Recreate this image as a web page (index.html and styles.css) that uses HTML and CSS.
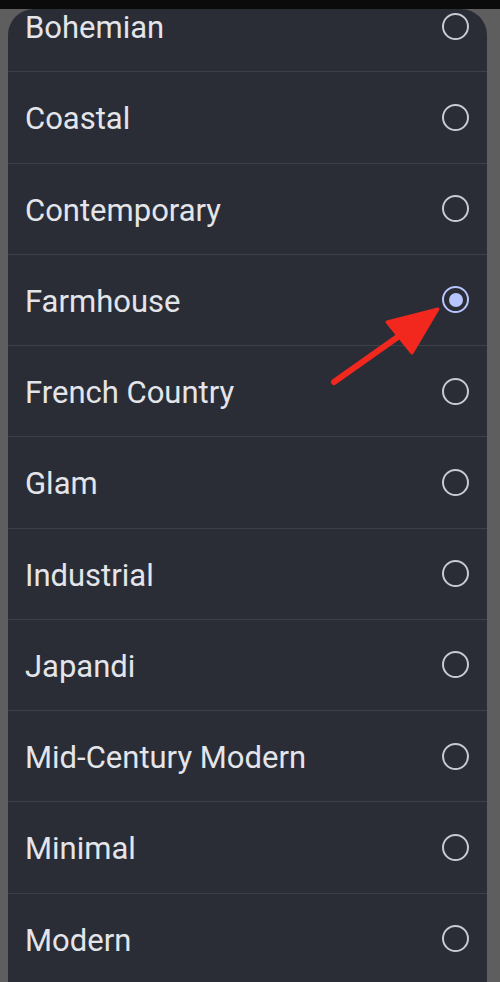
FILE: index.html
```html
<!DOCTYPE html>
<html lang="en">
<head>
    <meta charset="UTF-8">
    <meta name="viewport" content="width=device-width, initial-scale=1.0">
    <title>Style picker</title>
    <link rel="stylesheet" href="styles.css">
</head>
<body>
    <div class="status-bar"></div>
    <div class="sheet">
        <ul class="options">
            <li class="option"><span class="label">Bohemian</span><span class="radio"></span></li>
            <li class="option"><span class="label">Coastal</span><span class="radio"></span></li>
            <li class="option"><span class="label">Contemporary</span><span class="radio"></span></li>
            <li class="option"><span class="label">Farmhouse</span><span class="radio checked"></span></li>
            <li class="option"><span class="label">French Country</span><span class="radio"></span></li>
            <li class="option"><span class="label">Glam</span><span class="radio"></span></li>
            <li class="option"><span class="label">Industrial</span><span class="radio"></span></li>
            <li class="option"><span class="label">Japandi</span><span class="radio"></span></li>
            <li class="option"><span class="label">Mid-Century Modern</span><span class="radio"></span></li>
            <li class="option"><span class="label">Minimal</span><span class="radio"></span></li>
            <li class="option"><span class="label">Modern</span><span class="radio"></span></li>
        </ul>
    </div>
    <!-- annotation arrow pointing at the selected option -->
    <svg class="arrow" width="500" height="982" viewBox="0 0 500 982">
        <line x1="334" y1="382" x2="402" y2="334" stroke="#f2281f" stroke-width="6" stroke-linecap="round"/>
        <polygon points="438,309 387,322 412,353" fill="#f2281f" stroke="#f2281f" stroke-width="3" stroke-linejoin="round"/>
    </svg>
</body>
</html>
```

FILE: styles.css
```css
body {
    margin: 0;
    height: 982px;
    overflow: hidden;
    background-color: #5e5e5e;
    font-family: Roboto, 'Noto Sans', sans-serif;
    position: relative;
}
.status-bar {
    height: 9px;
    background-color: #0b0b0b;
}
.sheet {
    margin-left: 8px;
    width: 479px;
    height: 973px;
    background-color: #2a2d36;
    border-radius: 26px 26px 0 0;
    overflow: hidden;
}
.options {
    list-style: none;
    margin: -28px 0 0 0;
    padding: 0;
}
.option {
    height: 90.25px;
    border-bottom: 1px solid #3d4049;
    display: flex;
    align-items: center;
    justify-content: space-between;
    padding: 0 18px 0 17px;
    color: #e4e5ea;
    font-size: 31px;
}
.label {
    padding-top: 3px;
}
.radio {
    width: 23px;
    height: 23px;
    border: 2.5px solid #c9cad1;
    border-radius: 50%;
    display: flex;
    align-items: center;
    justify-content: center;
}
.radio.checked {
    border-color: #b7c5ff;
}
.radio.checked::after {
    content: "";
    width: 14px;
    height: 14px;
    border-radius: 50%;
    background-color: #b7c5ff;
}
.arrow {
    position: absolute;
    left: 0;
    top: 0;
}
```
